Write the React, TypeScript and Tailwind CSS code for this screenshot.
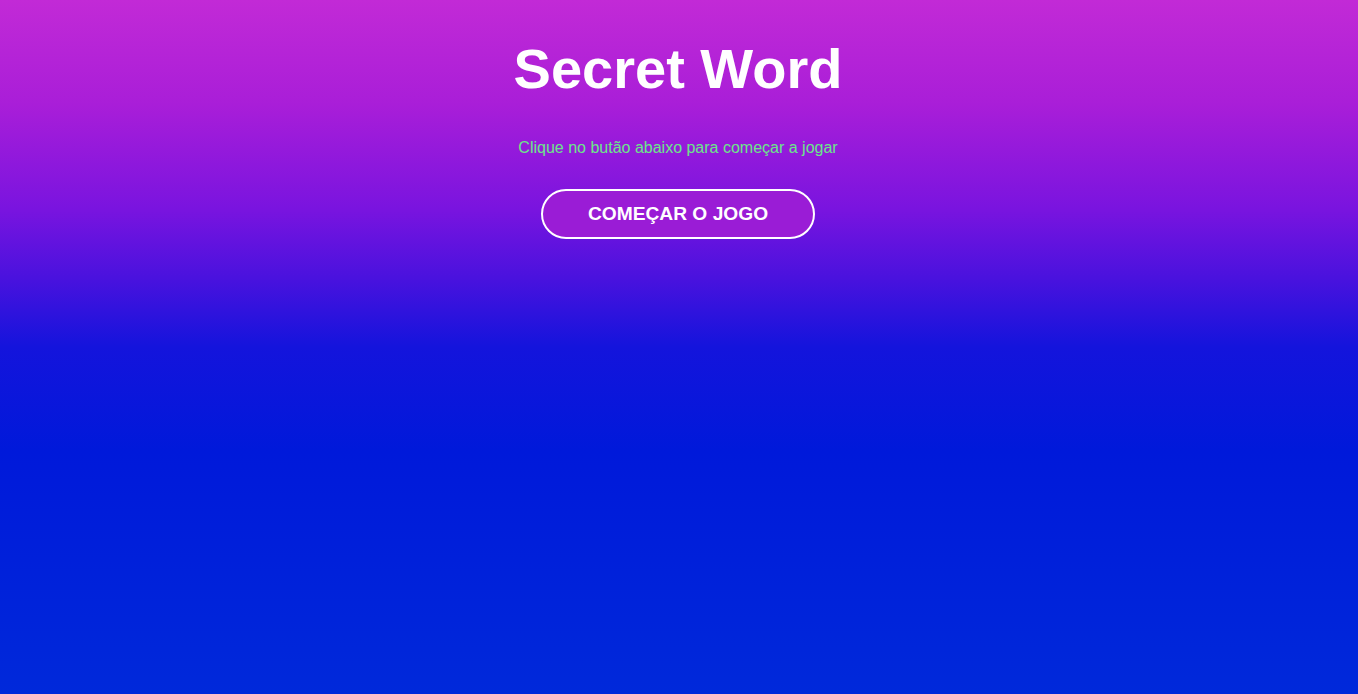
export default function App() {
  return (
    <div className="w-full h-[694px] pr-[2px] flex flex-col items-center bg-[linear-gradient(180deg,#c22ad6_0%,#a91ed8_15%,#7a14df_30%,#4a12de_40%,#1414dc_50%,#0019da_65%,#0029da_100%)] font-['Liberation_Sans',Arial,sans-serif]">
      <h1 className="mt-[41px] text-[56px] leading-[56px] font-bold text-white">Secret Word</h1>
      <p className="mt-[43px] text-[16px] leading-[16px] text-[#6ce68a]">Clique no butão abaixo para começar a jogar</p>
      <button className="mt-[33px] w-[274px] h-[50px] rounded-full border-2 border-white bg-[#9a1cd6] text-white font-bold text-[19.2px] leading-[22px] uppercase">
        Começar o jogo
      </button>
    </div>
  );
}
